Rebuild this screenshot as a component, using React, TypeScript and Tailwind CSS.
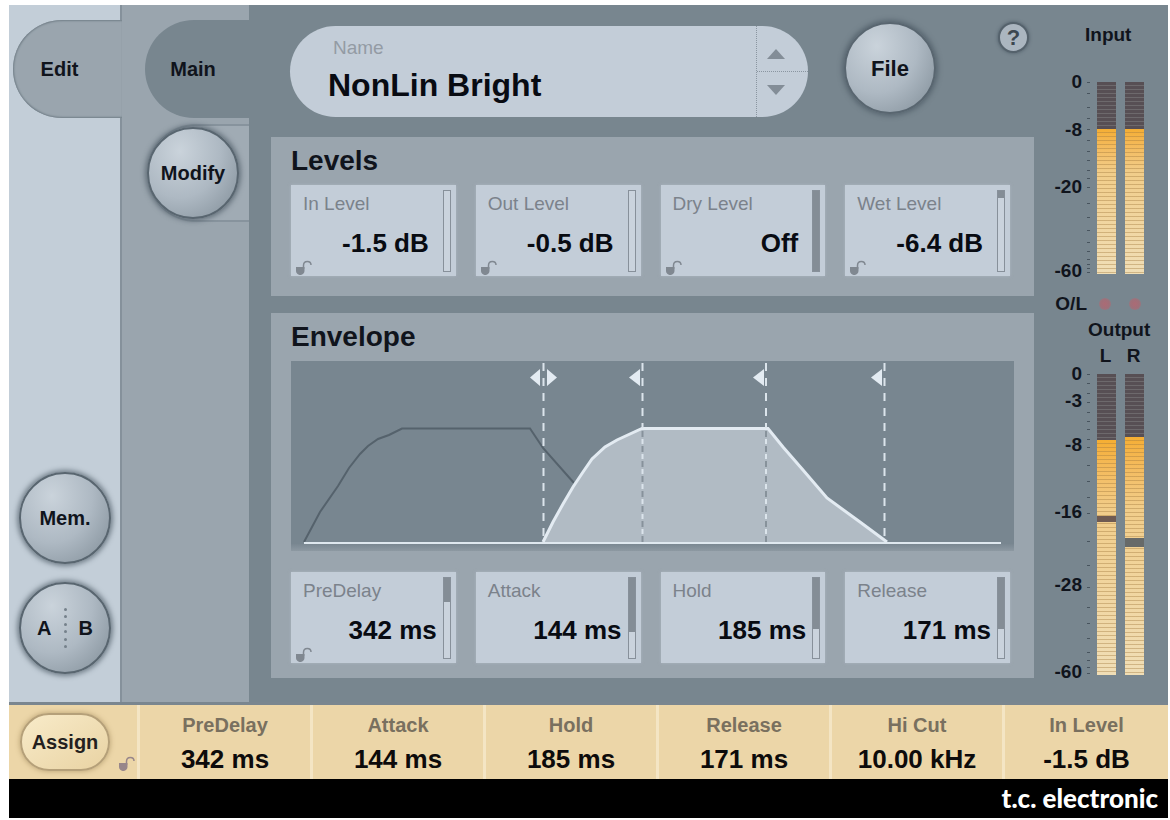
import { useState } from "react";

type Param = {
  id: string;
  label: string;
  value: string;
  travel: number;
  lock?: boolean;
};

const levels: Param[] = [
  { id: "in-level", label: "In Level", value: "-1.5 dB", travel: 0, lock: true },
  { id: "out-level", label: "Out Level", value: "-0.5 dB", travel: 0, lock: true },
  { id: "dry-level", label: "Dry Level", value: "Off", travel: 100, lock: true },
  { id: "wet-level", label: "Wet Level", value: "-6.4 dB", travel: 9, lock: true },
];

const envelope: Param[] = [
  { id: "predelay", label: "PreDelay", value: "342 ms", travel: 30, lock: true },
  { id: "attack", label: "Attack", value: "144 ms", travel: 68 },
  { id: "hold", label: "Hold", value: "185 ms", travel: 64 },
  { id: "release", label: "Release", value: "171 ms", travel: 64 },
];

const assigned = [
  { label: "PreDelay", value: "342 ms" },
  { label: "Attack", value: "144 ms" },
  { label: "Hold", value: "185 ms" },
  { label: "Release", value: "171 ms" },
  { label: "Hi Cut", value: "10.00 kHz" },
  { label: "In Level", value: "-1.5 dB" },
];

// the meter scales are not linear, so each mark carries the distance to the next one
const inputScale = [
  { db: "0", size: "h-[48px]" },
  { db: "-8", size: "h-[57px]" },
  { db: "-20", size: "h-[84px]" },
  { db: "-60", size: "h-[20px]" },
];

const outputScale = [
  { db: "0", size: "h-[27px]" },
  { db: "-3", size: "h-[44px]" },
  { db: "-8", size: "h-[67px]" },
  { db: "-16", size: "h-[73px]" },
  { db: "-28", size: "h-[87px]" },
  { db: "-60", size: "h-[20px]" },
];

const inputTicks = [0, 11, 25, 36, 47, 58, 69, 78, 88, 96, 105, 121, 135, 148, 160, 169, 177, 182, 186, 190];
const outputTicks = [0, 9, 19, 28, 38, 47, 55, 65, 73, 91, 107, 123, 139, 167, 191, 213, 233, 249, 264, 278, 286, 293, 299];

const knob =
  "flex size-[92px] shrink-0 items-center justify-center rounded-full border-2 border-[#596670] bg-radial-[at_35%_25%] from-[#cad3db] via-[#aeb9c3] to-[#7f8c96] font-bold text-[#10141c] shadow-[0_0_5px_2px_rgba(70,84,95,0.65)]";

function Lock({ className = "" }: { className?: string }) {
  return (
    <svg viewBox="0 0 18 15" className={`h-[15px] w-[18px] ${className}`} aria-hidden="true">
      <path d="M1 7h8.500v4a4.200 4 0 0 1-8.500 0z" fill="currentColor" />
      <path
        d="M8.500 9V5.500c0-2.700 1.500-4 3.800-4S16 2.800 16 5"
        fill="none"
        stroke="currentColor"
        strokeWidth="1.500"
      />
    </svg>
  );
}

function ParamCard({ param }: { param: Param }) {
  const [travel, setTravel] = useState(param.travel);

  return (
    <div className="flex h-[91px] bg-[#c3cdd8] py-[5px] pr-[5px] shadow-[0_0_3px_rgba(190,200,211,0.5)]">
      <div className="relative flex grow flex-col pl-3">
        <label htmlFor={param.id} className="mt-1 text-[19px] leading-5 text-[#7b828b]">
          {param.label}
        </label>
        <output
          htmlFor={param.id}
          className={`mt-[13px] text-right text-[26px] leading-8 font-bold text-[#080b12] ${
            param.value.endsWith("ms") ? "pr-1.5" : "pr-3.5"
          }`}
        >
          {param.value}
        </output>
        {param.lock && <Lock className="absolute -bottom-1 left-1 text-[#808891]" />}
      </div>
      <input
        id={param.id}
        type="range"
        min={0}
        max={100}
        value={travel}
        onChange={(e) => setTravel(Number(e.target.value))}
        className="h-[82px] w-2 shrink-0 appearance-none border border-[#87909a] [writing-mode:vertical-lr] [&::-webkit-slider-thumb]:size-0 [&::-webkit-slider-thumb]:appearance-none"
        style={{
          background: `linear-gradient(to bottom, #848d96 ${travel}%, #cad3dd ${travel}%)`,
        }}
      />
    </div>
  );
}

function EnvelopeGraph() {
  return (
    <svg
      viewBox="0 0 723 190"
      preserveAspectRatio="none"
      className="block h-[190px] w-full"
      role="img"
      aria-label="Envelope curve"
    >
      <defs>
        <linearGradient id="display" x1="0" y1="0" x2="0" y2="1">
          <stop offset="0" stopColor="#788690" />
          <stop offset="0.96" stopColor="#788690" />
          <stop offset="1" stopColor="#8d99a2" />
        </linearGradient>
      </defs>
      <rect width="723" height="190" fill="url(#display)" />
      <path
        d="M13 181L29 151L47 125L58 107L69 93L77 85L87 78L98 74L111 67.500H239L252 87L283 122"
        fill="none"
        stroke="#55626c"
        strokeWidth="2"
      />
      <path
        d="M252 181L262 161L272 143L282 126L292 111L301 98L314 86L326 79L351 67.500H477L492 86L512 109L536 137L569 161L596 181Z"
        fill="#b1bbc4"
      />
      <path d="M13 182H710" stroke="#dfe8ef" strokeWidth="2" />
      <path
        d="M252 181L262 161L272 143L282 126L292 111L301 98L314 86L326 79L351 67.500H477L492 86L512 109L536 137L569 161L596 181"
        fill="none"
        stroke="#e3ebf2"
        strokeWidth="3"
      />
      <g stroke="#dbe4eb" strokeWidth="2" strokeDasharray="8 7">
        <path d="M252.500 2V182" />
        <path d="M351.500 2V67" />
        <path d="M475 2V67" />
        <path d="M593.500 2V182" />
      </g>
      <g stroke="#dbe4eb" strokeWidth="2">
        <path d="M351.500 70V182M475 70V182" stroke="#87929b" strokeDasharray="6 9" />
        <path d="M351.500 78V182M475 78V182" strokeDasharray="5 10" />
      </g>
      <g fill="#e3ebf2">
        <path d="M249 8V25L239 16.500ZM256 8V25L266 16.500Z" />
        <path d="M349 8V25L338 16.500Z" />
        <path d="M473 8V25L462 16.500Z" />
        <path d="M591 8V25L580 16.500Z" />
      </g>
    </svg>
  );
}

function Scale({ marks }: { marks: { db: string; size: string }[] }) {
  return (
    <ul className="w-12 text-right text-[19px] leading-5">
      {marks.map((mark) => (
        <li key={mark.db} className={mark.size}>
          {mark.db}
        </li>
      ))}
    </ul>
  );
}

function Ticks({ marks, className }: { marks: number[]; className: string }) {
  return (
    <svg className={`mt-[10px] ml-[5px] w-[3px] ${className}`} aria-hidden="true">
      {marks.map((y) => (
        <rect key={y} y={y} width="3" height="1" fill="#48545e" />
      ))}
    </svg>
  );
}

function Bar({ off, peak, className }: { off: string; peak?: string; className: string }) {
  return (
    <div className={`relative mt-[10px] flex w-[19px] flex-col ${className}`}>
      <div
        className={`bg-[repeating-linear-gradient(to_bottom,#574f54_0px,#574f54_3px,#6d696c_3px,#6d696c_4px)] ${off}`}
      />
      <div className="flex grow bg-linear-to-b from-[#f5ae32] via-[#f1cd8a] via-30% to-[#f0deb6]">
        <div className="grow bg-[repeating-linear-gradient(to_bottom,transparent_0px,transparent_3px,rgba(160,120,60,0.4)_3px,rgba(160,120,60,0.4)_4px)]" />
      </div>
      {peak && <div className={`absolute inset-x-0 ${peak}`} />}
    </div>
  );
}

function Meters() {
  return (
    <aside className="w-[134px] shrink-0 pt-5 text-[19px] leading-5 font-bold text-[#10141c]">
      <h2 className="pl-[51px]">Input</h2>
      <div className="mt-[27px] flex">
        <Scale marks={inputScale} />
        <Ticks marks={inputTicks} className="h-[192px]" />
        <Bar off="h-[47px]" className="ml-[7px] h-[192px]" />
        <Bar off="h-[47px]" className="ml-[9px] h-[192px]" />
      </div>
      <div className="mt-[13px] flex items-center">
        <span className="w-[53px] text-right">O/L</span>
        <span className="ml-3 size-3 rounded-full bg-radial from-[#ab6b75] via-[#a06f79] to-[#84818a]" />
        <span className="ml-[18px] size-3 rounded-full bg-radial from-[#ab6b75] via-[#a06f79] to-[#84818a]" />
      </div>
      <h2 className="mt-1.5 pl-[54px]">Output</h2>
      <div className="mt-1.5 flex h-[18px] gap-[9px] pl-[62px] text-center">
        <span className="w-[19px]">L</span>
        <span className="w-[19px]">R</span>
      </div>
      <div className="flex">
        <Scale marks={outputScale} />
        <Ticks marks={outputTicks} className="h-[301px]" />
        <Bar off="h-[66px]" peak="top-[142px] h-[6px] bg-[#6f5b52]" className="ml-[7px] h-[301px]" />
        <Bar off="h-[63px]" peak="top-[164px] h-[9px] bg-[#676a69]" className="ml-[9px] h-[301px]" />
      </div>
    </aside>
  );
}

export default function App() {
  const [name, setName] = useState("NonLin Bright");

  return (
    <div className="flex min-h-screen flex-col bg-white pt-[5px] pr-0.5 pb-0.5 pl-[9px] font-['Liberation_Sans',Arial,sans-serif]">
      <main className="flex grow border-b-[3px] border-[#7a868f] bg-[#78868f]">
        <nav className="flex w-[113px] shrink-0 flex-col border-r-2 border-[#85919b] bg-[#c3ced8] pt-[15px] pb-7">
          <button className="relative -mr-0.5 ml-1 h-[98px] rounded-l-full bg-[#9aa5ae] pr-4 text-xl font-bold text-[#10141c] shadow-[inset_2px_0_2px_-1px_#74808a,inset_0_2px_2px_-1px_#74808a,inset_0_-2px_2px_-1px_#74808a]">
            Edit
          </button>
          <div className="mt-auto flex flex-col gap-[18px] pl-2.5">
            <button className={`${knob} text-xl`}>Mem.</button>
            <button className={`${knob} gap-3 text-xl`}>
              <span>A</span>
              <span className="flex h-10 flex-col justify-between">
                {[...Array(6)].map((_, i) => (
                  <span key={i} className="size-[3px] rounded-full bg-[#75818b]" />
                ))}
              </span>
              <span>B</span>
            </button>
          </div>
        </nav>

        <nav className="flex w-[127px] shrink-0 flex-col bg-[#9aa5ae] pt-[15px]">
          <button className="ml-[23px] h-[98px] rounded-l-full bg-[#78868f] pr-2 text-xl font-bold text-[#10141c]">
            Main
          </button>
          <div className="mt-1.5 ml-[25px] flex h-[98px] items-center rounded-l-full border-y-2 border-[#87939d] bg-[#a0abb4]">
            <button className={`${knob} text-xl`}>Modify</button>
          </div>
        </nav>

        <section className="grow pl-[22px]">
          <header className="flex h-[132px] pt-[17px] pl-[19px]">
            <div className="mt-1 flex h-[91px] w-[518px] overflow-hidden rounded-full bg-[#c3cdd8]">
              <div className="flex grow flex-col pl-[38px]">
                <label htmlFor="preset" className="mt-3 pl-[5px] text-[19px] leading-5 text-[#939ba4]">
                  Name
                </label>
                <input
                  id="preset"
                  value={name}
                  onChange={(e) => setName(e.target.value)}
                  className="w-full bg-transparent text-[32px] leading-[54px] font-bold text-[#080b12] outline-none"
                />
              </div>
              <div className="flex w-[52px] shrink-0 flex-col border-l border-dotted border-[#8a95a0] text-[#838d97]">
                <button aria-label="Previous preset" className="grow border-b border-dotted border-[#8a95a0] pt-2.5 pl-2.5">
                  <svg viewBox="0 0 18 10" className="h-[10px] w-[18px]">
                    <path d="M9 0l9 10H0z" fill="currentColor" />
                  </svg>
                </button>
                <button aria-label="Next preset" className="grow pb-2.5 pl-2.5">
                  <svg viewBox="0 0 18 10" className="h-[10px] w-[18px]">
                    <path d="M0 0h18L9 10z" fill="currentColor" />
                  </svg>
                </button>
              </div>
            </div>
            <button className={`${knob} ml-9 text-[22px]`}>File</button>
            <button
              aria-label="Help"
              className="mr-[5px] ml-auto size-[31px] rounded-full border-2 border-[#55626c] bg-[#abb6c0] text-[22px] leading-6 font-bold text-[#3c4750] shadow-[0_0_3px_1px_rgba(70,84,95,0.5)]"
            >
              ?
            </button>
          </header>

          <div className="bg-[#9aa5ae] px-5 pb-5">
            <h2 className="h-12 pt-2 text-[28px] leading-8 font-bold text-[#10141c]">Levels</h2>
            <div className="grid grid-cols-4 gap-5 pr-1">
              {levels.map((param) => (
                <ParamCard key={param.id} param={param} />
              ))}
            </div>
          </div>

          <div className="mt-[17px] bg-[#9aa5ae] px-5 pb-[15px]">
            <h2 className="h-12 pt-2 text-[28px] leading-8 font-bold text-[#10141c]">Envelope</h2>
            <EnvelopeGraph />
            <div className="mt-[21px] grid grid-cols-4 gap-5 pr-1">
              {envelope.map((param) => (
                <ParamCard key={param.id} param={param} />
              ))}
            </div>
          </div>
        </section>

        <Meters />
      </main>

      <div className="grid h-[74px] grid-cols-[131px_repeat(5,173fr)_163fr] bg-[#ecd6a8]">
        <div className="flex items-end border-r-3 border-[#f4e5c4] pb-2 pl-[11px]">
          <button className="h-[58px] w-[90px] rounded-[29px] border-2 border-[#b5a079] bg-linear-to-br from-[#f8ebc9] to-[#e9d3a3] text-xl font-bold text-[#241f20] shadow-[0_0_4px_1px_rgba(160,135,90,0.5)]">
            Assign
          </button>
          <Lock className="ml-2 text-[#97868a]" />
        </div>
        {assigned.map((slot) => (
          <div
            key={slot.label}
            className="border-r-3 border-[#f4e5c4] pt-2 text-center font-bold last:border-r-0"
          >
            <div className="text-xl leading-6 text-[#79705f]">{slot.label}</div>
            <div className="mt-1.5 text-[26px] leading-8 text-[#0d0b0b]">{slot.value}</div>
          </div>
        ))}
      </div>

      <footer className="flex h-[39px] items-center justify-end bg-black pr-2.5 font-['Lato',sans-serif] text-[26px] font-black text-white">
        t.c. electronic
      </footer>
    </div>
  );
}
